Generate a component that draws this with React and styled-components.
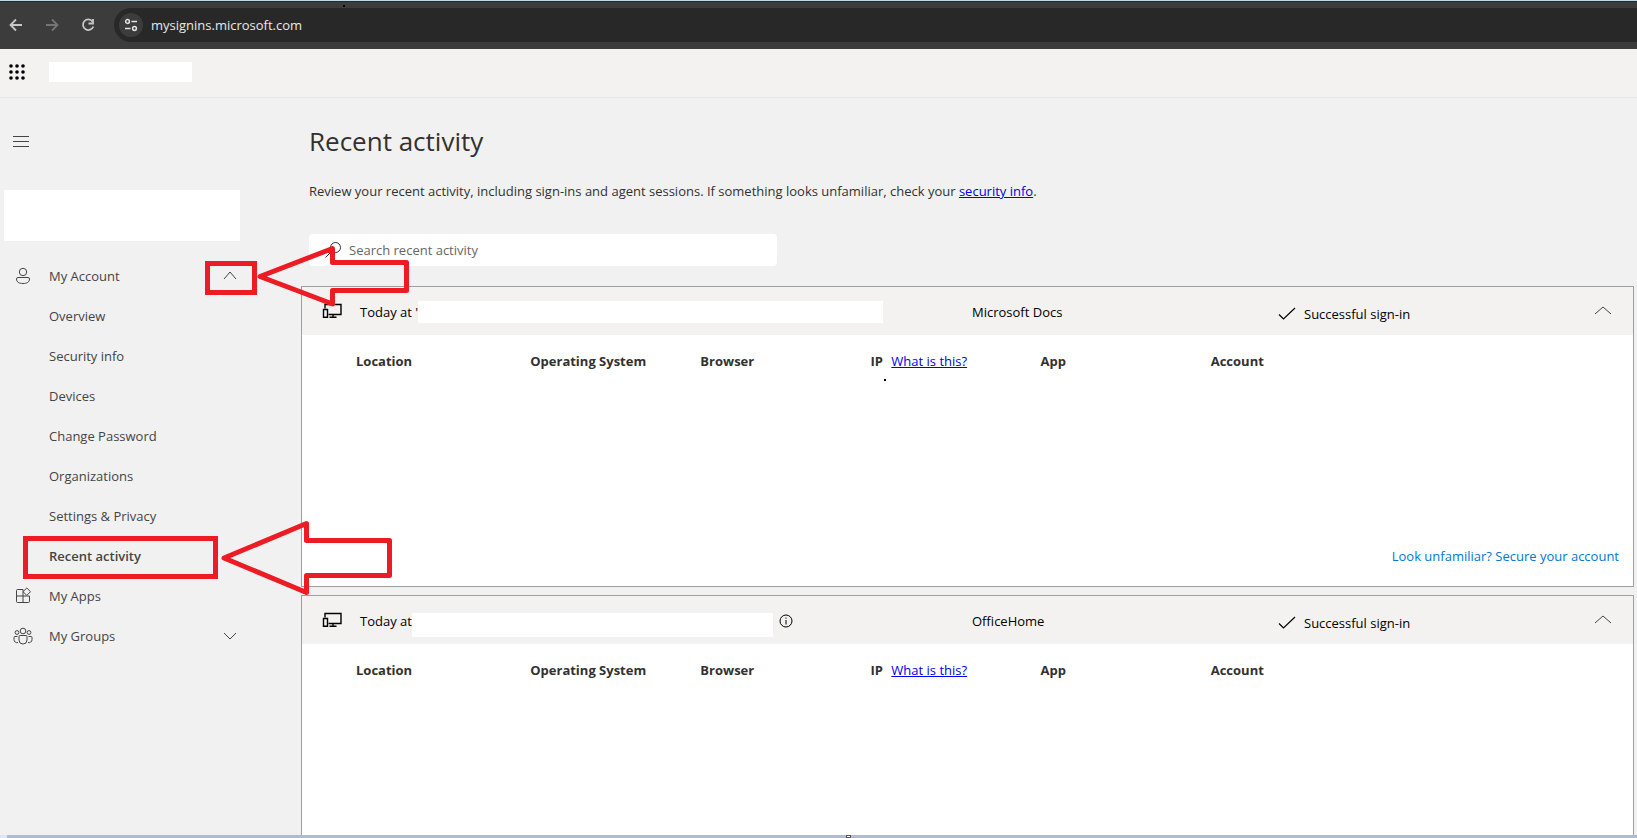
import React, { useState } from 'react';
import styled, { createGlobalStyle } from 'styled-components';

const GlobalStyle = createGlobalStyle`
  * {
    box-sizing: border-box;
  }

  body {
    margin: 0;
    font-family: 'Open Sans', 'Noto Sans', sans-serif;
    font-size: 13px;
    line-height: 20px;
    color: #323130;
    background: #f1f1f1;
  }
`;

const Page = styled.div`
  position: relative;
  display: flex;
  flex-direction: column;
  height: 100vh;
  overflow: hidden;
`;

const IconButton = styled.button`
  display: flex;
  align-items: center;
  justify-content: center;
  width: ${({ $size }) => $size || 32}px;
  height: ${({ $size }) => $size || 32}px;
  flex-shrink: 0;
  padding: 0;
  border: none;
  border-radius: 50%;
  background: ${({ $background }) => $background || 'none'};
  color: ${({ $color }) => $color || '#444'};
  cursor: pointer;
`;

const BrowserBar = styled.header`
  display: flex;
  align-items: center;
  gap: 4px;
  height: 49px;
  flex-shrink: 0;
  background: #3c3c3c;
  border-top: 1px solid #c3d5e4;
  box-shadow: inset 0 1px 0 #1e2d2f;
`;

const AddressBar = styled.div`
  display: flex;
  align-items: center;
  gap: 8px;
  flex: 1;
  height: 34px;
  margin-left: 6px;
  padding-left: 5px;
  border-radius: 17px 0 0 17px;
  background: #282828;
`;

const AddressInput = styled.input`
  flex: 1;
  padding: 0;
  border: none;
  outline: none;
  background: none;
  color: #e8e8e8;
  font: inherit;
`;

const SuiteHeader = styled.div`
  display: flex;
  align-items: center;
  height: 49px;
  flex-shrink: 0;
  gap: 16px;
  padding: 0 0 2px 1px;
  background: #f3f2f1;
  border-bottom: 1px solid #e6e6e6;
`;

const Redacted = styled.div`
  width: ${({ $width }) => $width};
  height: ${({ $height }) => $height}px;
  background: #fff;
`;

const Body = styled.div`
  display: flex;
  flex: 1;
  min-height: 0;
`;

const Sidebar = styled.aside`
  display: flex;
  flex-direction: column;
  align-items: flex-start;
  width: 301px;
  flex-shrink: 0;
  padding: 28px 0 0 4px;
`;

const ProfileBlock = styled(Redacted)`
  margin: 32px 0 15px;
`;

const NavList = styled.ul`
  align-self: stretch;
  margin: 0;
  padding: 0;
  list-style: none;
`;

const NavItem = styled.li`
  display: flex;
  align-items: center;
  height: 40px;
`;

const NavLink = styled.a`
  display: flex;
  align-items: center;
  width: 210px;
  color: #444;
  text-decoration: none;
  font-weight: ${({ $active }) => ($active ? 600 : 400)};
`;

const NavIcon = styled.span`
  display: flex;
  justify-content: center;
  width: 38px;
  margin-right: 7px;
`;

const Main = styled.main`
  display: flex;
  flex-direction: column;
  flex: 1;
  min-width: 0;
  padding-right: 3px;
`;

const Intro = styled.div`
  padding: 23px 8px 20px;
`;

const Title = styled.h1`
  margin: 0;
  font-size: 26px;
  line-height: 40px;
  font-weight: 400;
`;

const Description = styled.p`
  margin: 20px 0 33px;
`;

const InlineLink = styled.a`
  color: #0000ee;
`;

const SearchBox = styled.label`
  display: flex;
  align-items: center;
  gap: 8px;
  width: 468px;
  max-width: 100%;
  height: 32px;
  padding-left: 16px;
  border-radius: 4px;
  background: #fff;
`;

const SearchInput = styled.input`
  flex: 1;
  padding: 0;
  border: none;
  outline: none;
  background: none;
  font: inherit;

  &::placeholder {
    color: #666;
    opacity: 1;
  }
`;

const Panel = styled.section`
  display: flex;
  flex-direction: column;
  height: 301px;
  flex-shrink: 0;
  margin-bottom: 8px;
  border: 1px solid #a19f9d;
  background: #fff;
`;

const PanelHeader = styled.div`
  display: grid;
  grid-template-columns: 58px 2fr 1fr 1fr 49px;
  align-items: center;
  height: 48px;
  background: #f3f2f1;
  color: #000;
`;

const DeviceCell = styled.div`
  display: flex;
  justify-content: center;
  padding-left: 2px;
`;

const TimeCell = styled.div`
  display: flex;
  align-items: center;
  height: 100%;
  padding-top: 2px;
  white-space: nowrap;
`;

const SessionMask = styled(Redacted)`
  align-self: ${({ $low }) => ($low ? 'flex-end' : 'center')};
  margin: 0 6px ${({ $low }) => ($low ? 7 : 0)}px 0;
`;

const AppCell = styled.div`
  padding-top: 2px;
`;

const StatusCell = styled.div`
  display: flex;
  align-items: center;
  gap: 8px;
  padding-top: 5px;
`;

const DetailTable = styled.table`
  width: 77%;
  margin: 16px 0 0 54px;
  table-layout: fixed;
  border-collapse: collapse;

  th {
    padding: 0;
    text-align: left;
    font-weight: 700;
    white-space: nowrap;
  }

  th:first-child {
    width: 17%;
  }

  a {
    margin-left: 5px;
    font-weight: 400;
  }
`;

const SecureLink = styled.a`
  align-self: flex-end;
  margin: auto 14px 20px 0;
  color: #0078d4;
  text-decoration: none;
`;

const StatusStrip = styled.footer`
  display: flex;
  justify-content: center;
  height: 3px;
  flex-shrink: 0;
  padding-left: 52px;
  border-left: 7px solid #dce6f4;
  background: #b0bbd0;
`;

const StripHandle = styled.span`
  width: 5px;
  border: 1px solid #555;
  background: #fff;
`;

const Markup = styled.svg`
  position: absolute;
  top: 0;
  left: 0;
  pointer-events: none;
`;

const Icon = ({ size = 20, width = 1, children, ...rest }) => (
  <svg
    width={size}
    height={size}
    viewBox={`0 0 ${size} ${size}`}
    fill="none"
    stroke="currentColor"
    strokeWidth={width}
    aria-hidden="true"
    {...rest}
  >
    {children}
  </svg>
);

const BackIcon = () => (
  <Icon size={16} width={1.8}>
    <path d="M14 8H3M8 2.500L2.500 8L8 13.500" />
  </Icon>
);

const ForwardIcon = () => (
  <Icon size={16} width={1.8}>
    <path d="M2 8h11M8 2.500L13.500 8L8 13.500" />
  </Icon>
);

const ReloadIcon = () => (
  <Icon size={16} width={1.8}>
    <path d="M12.500 4.500A5.300 5.300 0 1 0 13.300 9.500" />
    <path d="M13 2v4.500H8.500" />
  </Icon>
);

const TuneIcon = () => (
  <Icon size={16} width={1.5}>
    <circle cx="4.500" cy="4.500" r="1.900" />
    <path d="M8.500 4.500H14M2 11.500h5.500" />
    <circle cx="11.500" cy="11.500" r="1.900" />
  </Icon>
);

const WaffleIcon = () => (
  <Icon size={16} fill="#000" stroke="none">
    {[2, 8, 14].map((y) =>
      [2, 8, 14].map((x) => <circle key={`${x}-${y}`} cx={x} cy={y} r="1.800" />)
    )}
  </Icon>
);

const MenuIcon = () => (
  <Icon size={18}>
    <path d="M2 3.500h16M2 8.500h16M2 13.500h16" />
  </Icon>
);

const PersonIcon = () => (
  <Icon size={18}>
    <circle cx="9" cy="5" r="3.700" />
    <path d="M4 10.500h10q1.500 0 1.500 1.500c0 3-2.500 4.500-6.500 4.500S2.500 15 2.500 12q0-1.500 1.500-1.500z" />
  </Icon>
);

const AppsIcon = () => (
  <Icon size={18}>
    <path d="M9 2.500H3.500q-1 0-1 1v11q0 1 1 1h11q1 0 1-1V9H2.500M9 2.500v13" />
    <path d="M12.800 1l3.700 3.700-3.700 3.700L9 4.700z" fill="#f1f1f1" />
  </Icon>
);

const GroupsIcon = () => (
  <Icon size={20}>
    <circle cx="10" cy="5" r="2.800" />
    <circle cx="4" cy="6.500" r="1.900" />
    <circle cx="16" cy="6.500" r="1.900" />
    <path d="M7 9.500h6q1 0 1 1v3.500a4 4 0 0 1-8 0v-3.500q0-1 1-1z" />
    <path d="M4.500 10.500H2q-1 0-1 1v2a3 3 0 0 0 4 3M15.500 10.500H18q1 0 1 1v2a3 3 0 0 1-4 3" />
  </Icon>
);

const SearchIcon = () => (
  <Icon size={16}>
    <circle cx="10.500" cy="5.500" r="5" />
    <path d="M7 9L0.500 15.500" />
  </Icon>
);

const DeviceIcon = () => (
  <Icon size={20} width={1.4}>
    <path d="M3 7.500V3.500h16v10H6.500M11 13.500v2.800M7.500 16.300h7" />
    <path d="M1.500 8.500h4v7.800h-4z" />
  </Icon>
);

const CheckIcon = () => (
  <Icon size={18} width={1.2}>
    <path d="M1 9.500L5.500 14L17 3" />
  </Icon>
);

const InfoIcon = () => (
  <Icon size={14}>
    <circle cx="7" cy="7" r="6" />
    <path d="M7 6v4.500M7 3.500v1.200" />
  </Icon>
);

const ChevronIcon = ({ size = 16, down }) => (
  <Icon size={size}>
    {down ? (
      <path d={`M${size / 2 - 6} 5l6 6l6-6`} />
    ) : (
      <path d={`M1 ${size / 2 + 3}L${size / 2} ${size / 2 - 4}L${size - 1} ${size / 2 + 3}`} />
    )}
  </Icon>
);

const accountPages = [
  'Overview',
  'Security info',
  'Devices',
  'Change Password',
  'Organizations',
  'Settings & Privacy',
  'Recent activity',
];

const columns = ['Location', 'Operating System', 'Browser', 'IP', 'App', 'Account'];

const sessions = [
  { id: 1, time: "Today at '", app: 'Microsoft Docs', width: '76%', height: 22, secure: true },
  { id: 2, time: 'Today at', app: 'OfficeHome', width: '59%', height: 24, info: true },
];

const Session = ({ session }) => (
  <Panel>
    <PanelHeader>
      <DeviceCell>
        <DeviceIcon />
      </DeviceCell>
      <TimeCell>
        <span>{session.time}</span>
        <SessionMask $width={session.width} $height={session.height} $low={session.info} />
        {session.info && <InfoIcon />}
      </TimeCell>
      <AppCell>{session.app}</AppCell>
      <StatusCell>
        <CheckIcon />
        Successful sign-in
      </StatusCell>
      <IconButton $size={38} aria-label="Collapse session">
        <ChevronIcon size={18} />
      </IconButton>
    </PanelHeader>
    <DetailTable>
      <thead>
        <tr>
          {columns.map((column) => (
            <th key={column} scope="col">
              {column}
              {column === 'IP' && (
                <>
                  {' '}
                  <InlineLink href="#ip">What is this?</InlineLink>
                </>
              )}
            </th>
          ))}
        </tr>
      </thead>
    </DetailTable>
    {session.secure && (
      <SecureLink href="#secure">Look unfamiliar? Secure your account</SecureLink>
    )}
  </Panel>
);

const App = () => {
  const [address, setAddress] = useState('mysignins.microsoft.com');
  const [query, setQuery] = useState('');

  return (
    <Page>
      <GlobalStyle />
      <BrowserBar>
        <IconButton $color="#c7c7c7" aria-label="Back">
          <BackIcon />
        </IconButton>
        <IconButton $color="#757575" aria-label="Forward">
          <ForwardIcon />
        </IconButton>
        <IconButton $color="#c7c7c7" aria-label="Reload">
          <ReloadIcon />
        </IconButton>
        <AddressBar>
          <IconButton $size={24} $background="#3c3c3c" $color="#e3e3e3" aria-label="Site information">
            <TuneIcon />
          </IconButton>
          <AddressInput
            aria-label="Address"
            value={address}
            onChange={(e) => setAddress(e.target.value)}
          />
        </AddressBar>
      </BrowserBar>

      <SuiteHeader>
        <IconButton aria-label="App launcher">
          <WaffleIcon />
        </IconButton>
        <Redacted $width="143px" $height={20} />
      </SuiteHeader>

      <Body>
        <Sidebar>
          <IconButton aria-label="Toggle menu">
            <MenuIcon />
          </IconButton>
          <ProfileBlock $width="236px" $height={51} />
          <NavList>
            <NavItem>
              <NavLink href="#account">
                <NavIcon>
                  <PersonIcon />
                </NavIcon>
                My Account
              </NavLink>
              <IconButton aria-label="Collapse My Account">
                <ChevronIcon size={14} />
              </IconButton>
            </NavItem>
            {accountPages.map((page) => (
              <NavItem key={page}>
                <NavLink href="#page" $active={page === 'Recent activity'}>
                  <NavIcon />
                  {page}
                </NavLink>
              </NavItem>
            ))}
            <NavItem>
              <NavLink href="#apps">
                <NavIcon>
                  <AppsIcon />
                </NavIcon>
                My Apps
              </NavLink>
            </NavItem>
            <NavItem>
              <NavLink href="#groups">
                <NavIcon>
                  <GroupsIcon />
                </NavIcon>
                My Groups
              </NavLink>
              <IconButton aria-label="Expand My Groups">
                <ChevronIcon size={16} down />
              </IconButton>
            </NavItem>
          </NavList>
        </Sidebar>

        <Main>
          <Intro>
            <Title>Recent activity</Title>
            <Description>
              Review your recent activity, including sign-ins and agent sessions. If something looks
              unfamiliar, check your <InlineLink href="#security">security info</InlineLink>.
            </Description>
            <SearchBox>
              <SearchIcon />
              <SearchInput
                type="text"
                aria-label="Search recent activity"
                placeholder="Search recent activity"
                value={query}
                onChange={(e) => setQuery(e.target.value)}
              />
            </SearchBox>
          </Intro>
          {sessions.map((session) => (
            <Session key={session.id} session={session} />
          ))}
        </Main>
      </Body>

      <StatusStrip>
        <StripHandle />
      </StatusStrip>

      {/* Red boxes and arrows pointing at the menu entries */}
      <Markup width="900" height="600" fill="none" stroke="#ed1c24" strokeWidth="5" aria-hidden="true">
        <rect x="207.500" y="263.500" width="47" height="29" />
        <path d="M260 276.500L332.500 248.500V262.500H406.500V290.500H332.500V304Z" strokeLinejoin="round" />
        <rect x="25.500" y="538.500" width="190" height="38" />
        <path d="M224 558L306.500 523.500V540.500H389.500V575.500H306.500V592.500Z" strokeLinejoin="round" />
        <path d="M343 6h2M884 380h2" stroke="#000" strokeWidth="2" />
      </Markup>
    </Page>
  );
};

export default App;
